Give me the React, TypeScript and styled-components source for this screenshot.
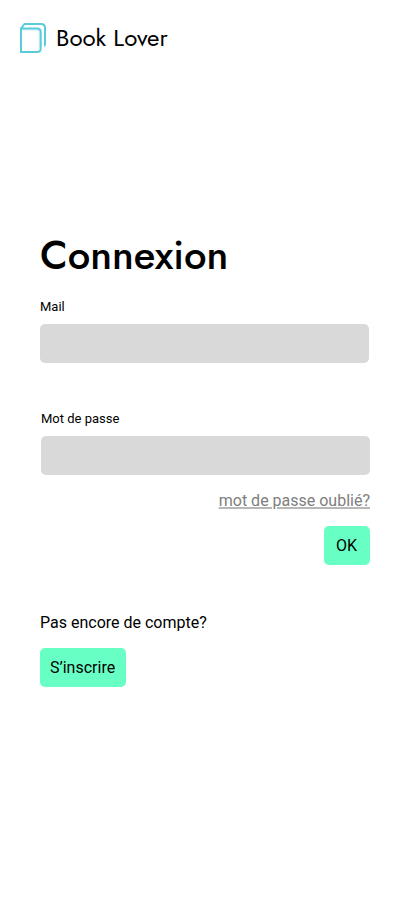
import React from "react";
import styled, { createGlobalStyle } from "styled-components";

const GlobalStyle = createGlobalStyle`
  *, *::before, *::after { box-sizing: border-box; }
  body {
    margin: 0;
    background: #fff;
    color: #000;
    font-family: Roboto, sans-serif;
  }
`;

const Page = styled.div`
  min-height: 917px;
  display: flex;
  flex-direction: column;
`;

const Header = styled.header`
  height: 76px;
  display: flex;
  align-items: center;
  padding-left: 20px;
  gap: 10px;
`;

const BrandName = styled.span`
  font: 400 24px/36px Jost, Futura, Lato, sans-serif;
  white-space: nowrap;
`;

const Main = styled.main`
  display: flex;
  flex-direction: column;
  padding: 152px 42px 0 40px;
`;

const Title = styled.h1`
  margin: 0;
  height: 54px;
  font: 500 40px/54px Jost, Futura, Lato, sans-serif;
`;

const Field = styled.div<{ $shift?: boolean }>`
  display: flex;
  flex-direction: column;
  gap: 10px;
  width: 329px;
  margin-left: ${(p) => (p.$shift ? "1px" : "0")};
`;

const Label = styled.label`
  font-size: 13px;
  line-height: 15px;
`;

const Input = styled.input`
  height: 39px;
  border: 0;
  border-radius: 5px;
  background: #d9d9d9;
  padding: 0 12px;
  font: 16px Roboto, sans-serif;
`;

const Form = styled.form`
  display: flex;
  flex-direction: column;
  margin-top: 17px;
  gap: 48px;
`;

const Actions = styled.div`
  display: flex;
  flex-direction: column;
  align-items: flex-end;
  gap: 16px;
  margin-top: 16px;
`;

const Forgot = styled.a`
  color: #7e7e7e;
  font-size: 16px;
  line-height: 19px;
  text-decoration: underline;
  text-decoration-color: #b7b7b7;
  text-decoration-thickness: 2px;
  text-underline-offset: 1px;
`;

const Button = styled.button<{ $inset: number; $width: number }>`
  width: ${(p) => p.$width}px;
  height: 39px;
  border: 0;
  border-radius: 5px;
  padding: 0 0 0 ${(p) => p.$inset}px;
  background: #68ffc5;
  color: #000;
  font: 16px/19px Roboto, sans-serif;
  text-align: left;
  white-space: nowrap;
`;

const Signup = styled.section`
  display: flex;
  flex-direction: column;
  align-items: flex-start;
  gap: 16px;
  margin-top: 48px;
`;

const Prompt = styled.p`
  margin: 0;
  font-size: 16px;
  line-height: 19px;
`;

export default function App() {
  return (
    <Page>
      <GlobalStyle />
      <Header>
        <svg width="26" height="30" viewBox="0 0 26 30" fill="none" stroke="#5bcbdc" strokeWidth="2">
          <path d="M1 5.5H17Q20.7 5.5 20.7 9V25.5Q20.7 29 17 29H1Z" />
          <path d="M2 7H17Q19.2 7 19.2 9V26" strokeWidth="1" opacity="0.3" />
          <path d="M1 5.5L4.5 1H21Q25 1 25 5V21" />
          <path d="M24 20H26V22L24 24.5Z" fill="#5bcbdc" stroke="none" />
        </svg>
        <BrandName>Book Lover</BrandName>
      </Header>
      <Main>
        <Title>Connexion</Title>
        <Form>
          <Field><Label htmlFor="mail">Mail</Label><Input id="mail" type="email" /></Field>
          <Field $shift><Label htmlFor="password">Mot de passe</Label><Input id="password" type="password" /></Field>
        </Form>
        <Actions><Forgot>mot de passe oublié?</Forgot><Button $width={46} $inset={12}>OK</Button></Actions>
        <Signup><Prompt>Pas encore de compte?</Prompt><Button $width={86} $inset={10}>S’inscrire</Button></Signup>
      </Main>
    </Page>
  );
}
